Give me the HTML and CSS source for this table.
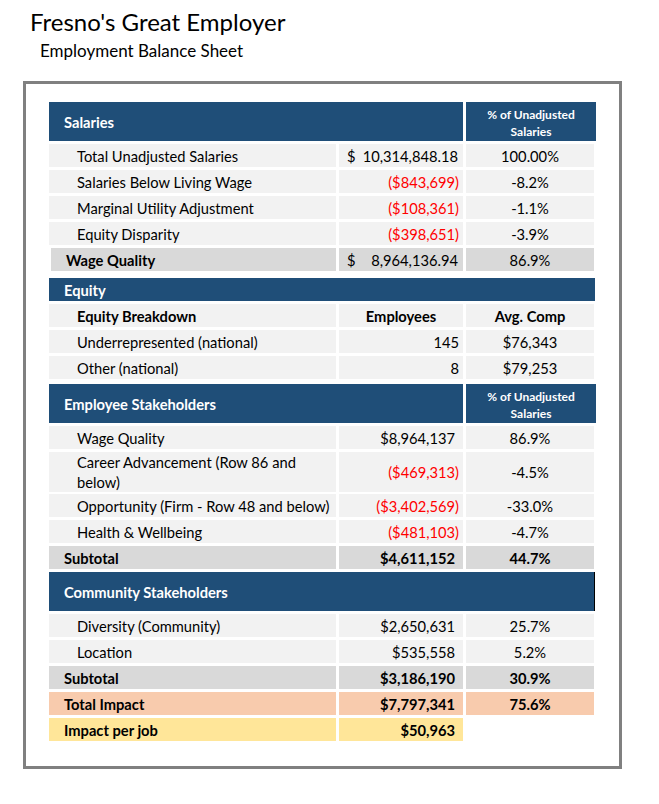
FILE: index.html
```html
<!DOCTYPE html>
<html>
<head>
<meta charset="utf-8">
<link rel="stylesheet" href="styles.css">
</head>
<body>
<div class="titles">
  <div class="title">Fresno's Great Employer</div>
  <div class="subtitle">Employment Balance Sheet</div>
</div>
<div class="frame">
  <div class="sheet">
    <div class="row head">
      <div class="c hd span2">Salaries</div>
      <div class="c hd pct">% of Unadjusted<br>Salaries</div>
    </div>
    <div class="row">
      <div class="c lab">Total Unadjusted Salaries</div>
      <div class="c acct"><span>$</span><span>10,314,848.18</span></div>
      <div class="c mid">100.00%</div>
    </div>
    <div class="row">
      <div class="c lab">Salaries Below Living Wage</div>
      <div class="c num neg">($843,699)</div>
      <div class="c mid">-8.2%</div>
    </div>
    <div class="row">
      <div class="c lab">Marginal Utility Adjustment</div>
      <div class="c num neg">($108,361)</div>
      <div class="c mid">-1.1%</div>
    </div>
    <div class="row">
      <div class="c lab">Equity Disparity</div>
      <div class="c num neg">($398,651)</div>
      <div class="c mid">-3.9%</div>
    </div>
    <div class="row sub wq">
      <div class="c blab">Wage Quality</div>
      <div class="c acct"><span>$</span><span>8,964,136.94</span></div>
      <div class="c mid">86.9%</div>
    </div>

    <div class="row single sec-equity">
      <div class="c hd full">Equity</div>
    </div>
    <div class="row">
      <div class="c lab bold">Equity Breakdown</div>
      <div class="c mid bold">Employees</div>
      <div class="c mid bold">Avg. Comp</div>
    </div>
    <div class="row">
      <div class="c lab">Underrepresented (national)</div>
      <div class="c num">145</div>
      <div class="c mid">$76,343</div>
    </div>
    <div class="row">
      <div class="c lab">Other (national)</div>
      <div class="c num">8</div>
      <div class="c mid">$79,253</div>
    </div>

    <div class="row head sec-emp">
      <div class="c hd span2">Employee Stakeholders</div>
      <div class="c hd pct">% of Unadjusted<br>Salaries</div>
    </div>
    <div class="row">
      <div class="c lab">Wage Quality</div>
      <div class="c num pos">$8,964,137</div>
      <div class="c mid">86.9%</div>
    </div>
    <div class="row tall">
      <div class="c lab wrap">Career Advancement (Row 86 and<br>below)</div>
      <div class="c num neg">($469,313)</div>
      <div class="c mid">-4.5%</div>
    </div>
    <div class="row">
      <div class="c lab">Opportunity (Firm - Row 48 and below)</div>
      <div class="c num neg">($3,402,569)</div>
      <div class="c mid">-33.0%</div>
    </div>
    <div class="row">
      <div class="c lab">Health &amp; Wellbeing</div>
      <div class="c num neg">($481,103)</div>
      <div class="c mid">-4.7%</div>
    </div>
    <div class="row sub">
      <div class="c blab">Subtotal</div>
      <div class="c num pos bold">$4,611,152</div>
      <div class="c mid bold">44.7%</div>
    </div>

    <div class="row head single">
      <div class="c hd full edge">Community Stakeholders</div>
    </div>
    <div class="row">
      <div class="c lab">Diversity (Community)</div>
      <div class="c num pos">$2,650,631</div>
      <div class="c mid">25.7%</div>
    </div>
    <div class="row">
      <div class="c lab">Location</div>
      <div class="c num pos">$535,558</div>
      <div class="c mid">5.2%</div>
    </div>
    <div class="row sub">
      <div class="c blab">Subtotal</div>
      <div class="c num pos bold">$3,186,190</div>
      <div class="c mid bold">30.9%</div>
    </div>
    <div class="row total">
      <div class="c blab">Total Impact</div>
      <div class="c num pos bold">$7,797,341</div>
      <div class="c mid bold">75.6%</div>
    </div>
    <div class="row perjob">
      <div class="c blab">Impact per job</div>
      <div class="c num pos bold">$50,963</div>
      <div class="c blank"></div>
    </div>
  </div>
</div>
</body>
</html>
```

FILE: styles.css
```css
* { box-sizing: border-box; }
body {
  margin: 0;
  background: #ffffff;
  font-family: Lato, "Liberation Sans", sans-serif;
  color: #000;
}
.titles {
  padding: 8px 0 0 30px;
}
.title {
  font-size: 24px;
  line-height: 28px;
  height: 28px;
}
.subtitle {
  font-size: 17px;
  line-height: 20px;
  margin-left: 10px;
  margin-top: 5px;
}
.frame {
  margin: 20px 0 0 23px;
  width: 599px;
  height: 688px;
  border: 3px solid #808080;
  padding: 18px 0 0 23px;
}
.sheet {
  width: 547px;
  display: flex;
  flex-direction: column;
  gap: 3px;
}
.row {
  display: grid;
  grid-template-columns: 287px 124px 128px;
  column-gap: 3px;
  height: 23px;
  font-size: 14.7px;
}
.row.head { height: 39px; grid-template-columns: 414px 130px; }
.row.single { grid-template-columns: 546px; }
.row.tall { height: 39px; }
.sec-equity { margin-top: 4px; }
.sec-emp { margin-top: 2px; }
.c {
  display: flex;
  align-items: center;
  background: #f2f2f2;
  white-space: nowrap;
}
.hd {
  background: #1f4e78;
  color: #fff;
  font-weight: bold;
  padding-left: 15px;
}
.hd.pct {
  justify-content: center;
  text-align: center;
  padding-left: 0;
  font-size: 12px;
  line-height: 17px;
  padding-top: 2px;
}
.hd.edge { border-right: 1px solid #000; }
.lab { padding-left: 28px; }
.lab.wrap { white-space: normal; line-height: 20px; }
.blab { padding-left: 15px; font-weight: bold; }
.bold { font-weight: bold; }
.mid { justify-content: center; }
.num { justify-content: flex-end; padding-right: 4px; }
.num.pos { padding-right: 8px; }
.neg { color: #ff0000; }
.acct { justify-content: space-between; padding: 0 5px 0 8px; }
.sub .c { background: #d9d9d9; }
.wq .c:first-child { margin-left: 2px; }
.total .c { background: #f8cbad; }
.perjob .c { background: #ffe699; }
.perjob .c.blank { background: transparent; }
```
